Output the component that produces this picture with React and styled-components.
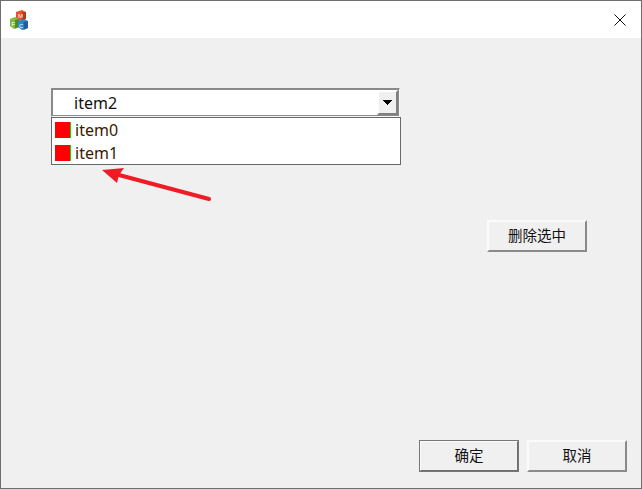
import styled, { createGlobalStyle } from "styled-components"

const GlobalStyle = createGlobalStyle`
    html, body {
        margin: 0;
        padding: 0;
        background: #fff;
    }
`

const Window = styled.div`
    position: relative;
    box-sizing: border-box;
    width: 642px;
    height: 489px;
    border: 1px solid #6e6e6e;
    display: flex;
    flex-direction: column;
    background: #f0f0f0;
    font-family: "Noto Sans", "Noto Sans CJK SC", sans-serif;
    overflow: hidden;
`

const TitleBar = styled.div`
    height: 37px;
    flex: none;
    background: #fff;
    display: flex;
    align-items: center;
    justify-content: space-between;
    padding: 0 15px 0 7px;
`

const Content = styled.div`
    flex: 1;
    display: flex;
    flex-direction: column;
    padding: 50px 14px 16px 50px;
`

const ComboColumn = styled.div`
    width: 350px;
    display: flex;
    flex-direction: column;
`

const ComboBox = styled.div`
    box-sizing: border-box;
    height: 29px;
    margin-right: 1px;
    background: #fff;
    border: 2px solid;
    border-color: #8a8a8a #f7f7f7 #f7f7f7 #8a8a8a;
    outline: 1px solid #8a8a8a;
    outline-offset: -2px;
    display: flex;
    justify-content: space-between;
    align-items: stretch;
    padding-left: 21px;
    font-size: 16px;
    line-height: 27px;
    color: #111;
`

const ComboButton = styled.div`
    width: 21px;
    box-sizing: border-box;
    background: #f0f0f0;
    border: 2px solid;
    border-color: #fff #808080 #808080 #fff;
    display: flex;
    align-items: center;
    justify-content: center;
`

const DropList = styled.div`
    box-sizing: border-box;
    height: 48px;
    background: #fff;
    border: 1px solid #686868;
    padding: 0 3px;
`

const DropItem = styled.div`
    height: 23px;
    display: flex;
    align-items: center;
    gap: 4px;
    font-size: 16px;
    color: #3a2000;
`

const Swatch = styled.span`
    box-sizing: border-box;
    width: 16px;
    height: 16px;
    background: #ff0000;
    border-right: 1px solid #00e000;
`

const PushButton = styled.button`
    box-sizing: border-box;
    width: 100px;
    height: 32px;
    padding: 0 0 4px;
    background: #f0f0f0;
    border: 2px solid;
    border-color: #fbfbfb ${(p) => (p.$primary ? "#6e6e6e" : "#8a8a8a")}
        ${(p) => (p.$primary ? "#6e6e6e" : "#8a8a8a")} #fbfbfb;
    outline: ${(p) => (p.$primary ? "1px solid #777" : "none")};
    outline-offset: -1px;
    font-family: "Noto Sans CJK SC", sans-serif;
    font-size: 14.5px;
    color: #111;
`

const ActionRow = styled.div`
    display: flex;
    justify-content: flex-end;
    margin-top: 55px;
    padding-right: 40px;
`

const Footer = styled.div`
    margin-top: auto;
    display: flex;
    justify-content: flex-end;
    gap: 8px;
`

const Annotation = styled.svg`
    position: absolute;
    left: 94px;
    top: 159px;
`

function AppIcon() {
    return (
        <svg width="22" height="22" viewBox="0 0 22 22">
            <path d="M8 3l6-2 4 2v7l-6 2-4-3z" fill="#e8502c" />
            <path d="M14 3.5l4-0.5v7l-4 1.5z" fill="#b53c1a" />
            <path d="M2 10l5-2 4 2v8l-5 2-4-3z" fill="#86b83e" />
            <path d="M7 11l4-1v8l-4 1.5z" fill="#4b8a26" />
            <path d="M10 12l6-2 4 2v7l-6 2-4-3z" fill="#2f86c8" />
            <path d="M15.5 13l4.5-1v7l-4.5 2z" fill="#1b5f9c" />
            <text x="10" y="9" fontSize="6" fill="#fff" fontFamily="Liberation Sans">M</text>
            <text x="3.5" y="17" fontSize="6" fill="#fff" fontFamily="Liberation Sans">F</text>
            <text x="11" y="18.5" fontSize="6" fill="#fff" fontFamily="Liberation Sans">C</text>
        </svg>
    )
}

function CloseIcon() {
    return (
        <svg width="12" height="12" viewBox="0 0 12 12">
            <path d="M0.5 0.5l11 11M11.5 0.5l-11 11" stroke="#111" strokeWidth="1" fill="none" />
        </svg>
    )
}

export default function App() {
    return (
        <Window>
            <GlobalStyle />
            <TitleBar>
                <AppIcon />
                <CloseIcon />
            </TitleBar>
            <Content>
                <ComboColumn>
                    <ComboBox>
                        item2
                        <ComboButton>
                            <svg width="9" height="5" viewBox="0 0 9 5">
                                <path d="M0 0h9v1h-1v1h-1v1h-1v1h-1v1h-1v-1h-1v-1h-1v-1h-1v-1h-1z" fill="#000" />
                            </svg>
                        </ComboButton>
                    </ComboBox>
                    <DropList>
                        <DropItem>
                            <Swatch />
                            item0
                        </DropItem>
                        <DropItem>
                            <Swatch />
                            item1
                        </DropItem>
                    </DropList>
                </ComboColumn>
                <ActionRow>
                    <PushButton>删除选中</PushButton>
                </ActionRow>
                <Footer>
                    <PushButton $primary>确定</PushButton>
                    <PushButton>取消</PushButton>
                </Footer>
            </Content>
            <Annotation width="120" height="45" viewBox="0 0 120 45">
                <path d="M114 39L24 15" stroke="#ee1c25" strokeWidth="4" strokeLinecap="round" />
                <path d="M7 10L29 8L24 15L22 23z" fill="#ee1c25" />
            </Annotation>
        </Window>
    )
}
